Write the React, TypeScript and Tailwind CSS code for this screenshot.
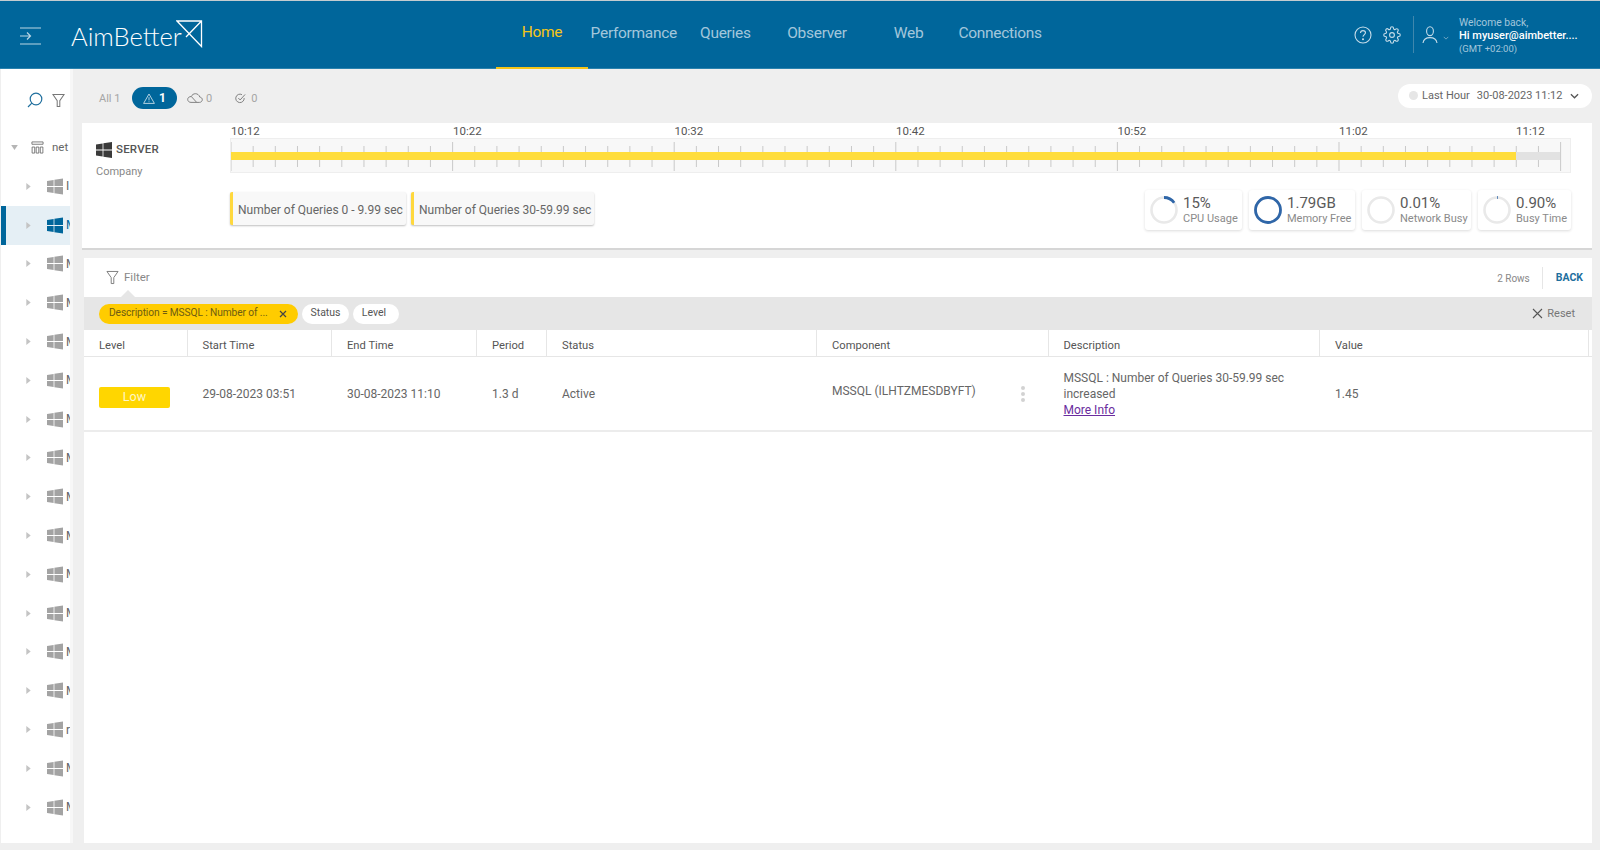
import React from "react";

function Win({ className }: { className: string }) {
  return (
    <svg viewBox="0 0 16 16" className={className} fill="currentColor">
      <polygon points="0,2.4 6.6,1.4 6.6,7.5 0,7.5" />
      <polygon points="7.4,1.3 16,0 16,7.5 7.4,7.5" />
      <polygon points="0,8.4 6.6,8.4 6.6,14.6 0,13.6" />
      <polygon points="7.4,8.4 16,8.4 16,16 7.4,14.7" />
    </svg>
  );
}

function Ring({ pct, start = -90 }: { pct: number; start?: number }) {
  const r = 12.5;
  const c = 2 * Math.PI * r;
  return (
    <svg viewBox="0 0 30 30" className="w-[30px] h-[30px] shrink-0">
      <circle cx="15" cy="15" r={r} fill="none" stroke="#e9e9e9" strokeWidth="2.6" />
      <circle
        cx="15"
        cy="15"
        r={r}
        fill="none"
        stroke="#2f66a8"
        strokeWidth="2.8"
        strokeDasharray={`${(c * pct) / 100} ${c}`}
        transform={`rotate(${start} 15 15)`}
      />
    </svg>
  );
}

const rows = ["I", "M", "M", "M", "M", "M", "M", "M", "M", "M", "M", "M", "M", "M", "r", "M", "M"];
const ticks = Array.from({ length: 61 }, (_, i) => i);

function Metric({ pct, value, label, w }: { pct: number; value: string; label: string; w: string }) {
  return (
    <div className={`${w} h-[40px] flex items-center gap-[4px] pl-[4px] bg-white rounded-[3px] shadow-[0_1px_3px_rgba(0,0,0,0.14)]`}>
      <Ring pct={pct} />
      <div className="flex flex-col">
        <span className="text-[15px] leading-[18px] text-[#5a5a5a]">{value}</span>
        <span className="text-[11px] leading-[14px] text-[#8a8a8a] whitespace-nowrap">{label}</span>
      </div>
    </div>
  );
}

function Head({ children, last }: { children?: React.ReactNode; last?: boolean }) {
  return (
    <div className={`h-full flex items-center pt-[7px] text-[11.2px] text-[#555] ${last ? "" : "pl-[15px] border-r border-[#e6e6e6]"}`}>
      {children}
    </div>
  );
}

function Cell({ children }: { children?: React.ReactNode }) {
  return <div className="flex items-center pl-[15px] text-[12px] text-[#666]">{children}</div>;
}

export default function App() {
  return (
    <div className="w-[1600px] h-[850px] overflow-hidden bg-[#efefef] border-t border-[#c4ccd0] font-['Roboto',sans-serif]">
      <header className="h-[68px] bg-[#00669b] border-b border-[#2a82ae] flex items-center">
        <svg viewBox="0 0 22 18" className="w-[22px] h-[18px] ml-[20px] mt-[3px] shrink-0 text-[#b9d5e4]" fill="none" stroke="currentColor" strokeWidth="1.2">
          <path d="M0 1H21M0 17H21M0 9H10M7 5.5L10.5 9L7 12.5" />
        </svg>
        <div className="ml-[29px] w-[135px] shrink-0 flex items-start -mt-[2px]">
          <span className="w-[105px] font-['Lato',sans-serif] font-light text-[25.5px] leading-[30px] text-white mt-[4px] whitespace-nowrap">AimBetter</span>
          <svg viewBox="0 0 27 28" className="w-[27px] h-[28px] mt-[3px] shrink-0" fill="none" stroke="#fff" strokeWidth="1.3">
            <path d="M1 1H25.5V26.5L1 1ZM25.5 1L10 17" />
          </svg>
        </div>
        <nav className="ml-[290px] flex self-start h-[68px] shrink-0 text-[15.5px] tracking-[-0.3px] text-[#a3c7db]">
          <a className="w-[92px] h-full flex items-center justify-center pb-[3px] text-[#f5c518] border-b-2 border-[#f5c518]">Home</a>
          <a className="w-[91.6px] h-full flex items-center justify-center pb-[3px]">Performance</a>
          <a className="w-[91.6px] h-full flex items-center justify-center pb-[3px]">Queries</a>
          <a className="w-[91.6px] h-full flex items-center justify-center pb-[3px]">Observer</a>
          <a className="w-[91.6px] h-full flex items-center justify-center pb-[3px]">Web</a>
          <a className="w-[91.6px] h-full flex items-center justify-center pb-[3px]">Connections</a>
        </nav>
        <div className="ml-[308px] flex items-center">
          <svg viewBox="0 0 18 18" className="w-[18px] h-[18px] text-[#c5dce9]" fill="none" stroke="currentColor" strokeWidth="1.1">
            <circle cx="9" cy="9" r="8" />
            <path d="M6.5 7C6.5 5.5 7.6 4.6 9 4.6C10.5 4.6 11.5 5.5 11.5 6.8C11.5 8.5 9 8.7 9 10.8" />
            <circle cx="9" cy="13.2" r="0.5" fill="currentColor" />
          </svg>
          <svg viewBox="0 0 24 24" className="w-[18px] h-[18px] ml-[11px] text-[#c5dce9]" fill="none" stroke="currentColor" strokeWidth="1.5">
            <circle cx="12" cy="12" r="3.2" />
            <path d="M19.4 15a1.65 1.65 0 0 0 .33 1.82l.06.06a2 2 0 1 1-2.83 2.83l-.06-.06a1.65 1.65 0 0 0-1.82-.33 1.65 1.65 0 0 0-1 1.51V21a2 2 0 0 1-4 0v-.09A1.65 1.65 0 0 0 9 19.4a1.65 1.65 0 0 0-1.82.33l-.06.06a2 2 0 1 1-2.83-2.83l.06-.06a1.65 1.65 0 0 0 .33-1.82 1.65 1.65 0 0 0-1.51-1H3a2 2 0 0 1 0-4h.09A1.65 1.65 0 0 0 4.6 9a1.65 1.65 0 0 0-.33-1.82l-.06-.06a2 2 0 1 1 2.83-2.83l.06.06a1.65 1.65 0 0 0 1.82.33H9a1.65 1.65 0 0 0 1-1.51V3a2 2 0 0 1 4 0v.09a1.65 1.65 0 0 0 1 1.51 1.65 1.65 0 0 0 1.82-.33l.06-.06a2 2 0 1 1 2.83 2.83l-.06.06a1.65 1.65 0 0 0-.33 1.82V9a1.65 1.65 0 0 0 1.51 1H21a2 2 0 0 1 0 4h-.09a1.65 1.65 0 0 0-1.51 1z" />
          </svg>
          <div className="w-px h-[37px] bg-[#3f87ad] ml-[12px]" />
          <svg viewBox="0 0 16 18" className="w-[16px] h-[18px] ml-[8px] text-[#c5dce9]" fill="none" stroke="currentColor" strokeWidth="1.1">
            <ellipse cx="8" cy="5.2" rx="3.4" ry="4.4" />
            <path d="M1 17C1.6 13 4.2 11.6 8 11.6C11.8 11.6 14.4 13 15 17" />
          </svg>
          <svg viewBox="0 0 8 5" className="w-[6px] h-[4px] ml-[5px] mt-[6px] text-[#8fb8cf]" fill="none" stroke="currentColor" strokeWidth="1">
            <path d="M1 1L4 4L7 1" />
          </svg>
          <div className="ml-[10px] flex flex-col w-[125px]">
            <span className="text-[10.3px] leading-[13px] text-[#a3c7db]">Welcome back,</span>
            <span className="text-[11px] leading-[14px] text-white font-medium whitespace-nowrap">Hi myuser@aimbetter....</span>
            <span className="text-[9.5px] leading-[11px] text-[#a3c7db]">(GMT +02:00)</span>
          </div>
        </div>
      </header>

      <div className="flex h-[774px]">
        <aside className="w-[73px] h-full shrink-0 bg-white border-l border-[#efefef] border-r-[3px] border-r-[#f7f7f7] overflow-hidden">
          <div className="h-[59px] flex items-center pl-[26px] pt-[3px] gap-[9px]">
            <svg viewBox="0 0 16 16" className="w-[16px] h-[16px] text-[#1f6f9e]" fill="none" stroke="currentColor" strokeWidth="1.2">
              <circle cx="9" cy="7" r="5.8" />
              <path d="M4.8 11.2L1 15" />
            </svg>
            <svg viewBox="0 0 14 15" className="w-[13px] h-[15px] text-[#777]" fill="none" stroke="currentColor" strokeWidth="1.1">
              <path d="M1 1H13L8.4 7.6V14H5.6V7.6L1 1Z" />
            </svg>
          </div>
          <div className="h-[39px] flex items-center whitespace-nowrap">
            <svg viewBox="0 0 8 6" className="w-[7px] h-[5px] ml-[10px] text-[#b5b5b5]" fill="currentColor">
              <polygon points="0,0 8,0 4,6" />
            </svg>
            <svg viewBox="0 0 14 14" className="w-[13px] h-[13px] ml-[13px] text-[#666]" fill="none" stroke="currentColor" strokeWidth="0.9">
              <path d="M1 1H13V3.5H1ZM1.2 6.5H4V13H1.2ZM5.6 6.5H8.4V13H5.6ZM10 6.5H12.8V13H10Z" />
            </svg>
            <span className="ml-[8px] text-[11.5px] text-[#666]">net</span>
          </div>
          {rows.map((r, i) => (
            <div
              key={i}
              className={`h-[38.8px] flex items-center whitespace-nowrap ${i === 1 ? "bg-[#e5eff5] border-l-[5px] border-[#00669b]" : "pl-[5px]"}`}
            >
              <svg viewBox="0 0 5 8" className="w-[5px] h-[7px] ml-[20px] shrink-0 text-[#c4c4c4]" fill="currentColor">
                <polygon points="0,0 5,4 0,8" />
              </svg>
              <Win className={`w-[16px] h-[17px] ml-[16px] shrink-0 ${i === 1 ? "text-[#00669b]" : "text-[#a3a3a3]"}`} />
              <span className={`ml-[3px] text-[12px] ${i === 1 ? "text-[#00669b]" : "text-[#666]"}`}>{r}</span>
            </div>
          ))}
        </aside>

        <main className="flex-1 min-w-0 pl-[9px] pr-[8px] flex flex-col">
          <div className="h-[54px] flex items-center justify-between text-[11px] text-[#a5a5a5] pb-[1px]">
            <div className="flex items-center pl-[17px] mt-[5px]">
              <span className="w-[33px] pt-[3px]">All 1</span>
              <div className="w-[45px] h-[22px] rounded-full bg-[#00669b] flex items-center justify-center gap-[4px] text-white font-bold text-[12px]">
                <svg viewBox="0 0 12 11" className="w-[12px] h-[11px] text-[#c5dce9]" fill="none" stroke="currentColor" strokeWidth="0.9">
                  <path d="M6 1L11.4 10.4H0.6L6 1ZM6 4.2V7.4M6 8.4V9.2" />
                </svg>
                1
              </div>
              <svg viewBox="0 0 16 10" className="w-[16px] h-[10px] ml-[10px] text-[#777]" fill="none" stroke="currentColor" strokeWidth="0.9">
                <path d="M4 9.4H12.4C14 9.4 15.3 8.2 15.3 6.7C15.3 5.3 14.2 4.2 12.8 4.1C12.2 2 10.4 0.7 8.4 0.7C6.6 0.7 5 1.8 4.3 3.5C2.3 3.5 0.7 4.6 0.7 6.4C0.7 8.2 2.2 9.4 4 9.4ZM4.3 3.5L9.5 9.2" />
              </svg>
              <span className="ml-[3px] pt-[3px]">0</span>
              <svg viewBox="0 0 12 12" className="w-[11px] h-[11px] ml-[23px] text-[#777]" fill="none" stroke="currentColor" strokeWidth="1">
                <path d="M10 5.5A4.6 4.6 0 1 1 7.6 1.8M3.6 5.5L5.6 7.6L11 1.6" />
              </svg>
              <span className="ml-[5px] pt-[3px]">0</span>
            </div>
            <div className="w-[194px] h-[24px] rounded-full bg-white flex items-center pl-[11px] text-[11px] text-[#666]">
              <span className="w-[9px] h-[9px] rounded-full bg-[#e6e6e6]" />
              <span className="ml-[4px] pt-[2px]">Last Hour</span>
              <span className="ml-[7px] pt-[2px]">30-08-2023 11:12</span>
              <svg viewBox="0 0 10 6" className="w-[9px] h-[6px] ml-[7px] text-[#555]" fill="none" stroke="currentColor" strokeWidth="1.4">
                <path d="M1 1L5 5L9 1" />
              </svg>
            </div>
          </div>

          <section className="h-[127px] shrink-0 bg-white border-b-2 border-[#d6d6d6] flex">
            <div className="w-[148px] pl-[14px] pt-[18px]">
              <div className="flex items-center">
                <Win className="w-[16px] h-[16px] text-[#3a3a3a]" />
                <span className="ml-[4px] text-[11.5px] font-medium tracking-[0.2px] text-[#555]">SERVER</span>
              </div>
              <div className="mt-[6px] text-[11px] text-[#888]">Company</div>
            </div>
            <div className="w-[1341px] flex flex-col">
              <div className="h-[15px] pl-[1px] pt-[1px] flex text-[11.5px] leading-[15px] text-[#555]">
                <span className="w-[222px]">10:12</span>
                <span className="w-[221.5px]">10:22</span>
                <span className="w-[221.5px]">10:32</span>
                <span className="w-[221.5px]">10:42</span>
                <span className="w-[221.5px]">10:52</span>
                <span className="w-[177px]">11:02</span>
                <span>11:12</span>
              </div>
              <div className="h-[35px] bg-[#f8f8f8] border border-[#eeeeee] overflow-hidden">
                <svg viewBox="0 0 1339 33" className="w-[1339px] h-[33px] block">
                  {ticks.map((i) => (
                    <line
                      key={i}
                      x1={i * 22.16}
                      x2={i * 22.16}
                      y1={i % 10 === 0 ? 3 : 7}
                      y2={i % 10 === 0 ? 32 : 28}
                      stroke="#c9c9c9"
                      strokeWidth="1"
                    />
                  ))}
                  <rect x="0" y="13" width="1329" height="8" fill="#e2e2e2" />
                  <rect x="0" y="13" width="1285" height="8" fill="#ffdd3c" />
                </svg>
              </div>
              <div className="mt-[19px] flex items-start justify-between">
                <div className="flex gap-[5px]">
                  <div className="w-[176px] h-[33px] bg-[#f8f8f8] border-l-[3px] border-[#ffd83d] rounded-[2px] shadow-[0_1px_2px_rgba(0,0,0,0.25)] flex items-center pl-[5px] pt-[2px] text-[12px] text-[#666] whitespace-nowrap">
                    Number of Queries 0 - 9.99 sec
                  </div>
                  <div className="w-[183px] h-[33px] bg-[#f8f8f8] border-l-[3px] border-[#ffd83d] rounded-[2px] shadow-[0_1px_2px_rgba(0,0,0,0.25)] flex items-center pl-[5px] pt-[2px] text-[12px] text-[#666] whitespace-nowrap">
                    Number of Queries 30-59.99 sec
                  </div>
                </div>
                <div className="flex gap-[7px] -mt-[2px]">
                  <Metric pct={15} value="15%" label="CPU Usage" w="w-[97px]" />
                  <Metric pct={100} value="1.79GB" label="Memory Free" w="w-[106px]" />
                  <Metric pct={0} value="0.01%" label="Network Busy" w="w-[109px]" />
                  <Metric pct={1} value="0.90%" label="Busy Time" w="w-[93px]" />
                </div>
              </div>
            </div>
          </section>

          <section className="mt-[8px] ml-[2px] h-[585px] bg-white flex flex-col">
            <div className="h-[39px] shrink-0 flex items-center pl-[22px] pr-[9px] text-[11.5px] text-[#888]">
              <svg viewBox="0 0 14 15" className="w-[13px] h-[15px] text-[#777]" fill="none" stroke="currentColor" strokeWidth="1">
                <path d="M1 1H13L8.4 7.6V14H5.6V7.6L1 1Z" />
              </svg>
              <span className="ml-[5px]">Filter</span>
              <span className="ml-auto pt-[1px] text-[10px]">2 Rows</span>
              <span className="ml-[12px] w-px h-[22px] bg-[#e6e6e6]" />
              <span className="ml-[13px] pt-[1px] text-[10.5px] font-bold text-[#1f6f9e]">BACK</span>
            </div>
            <div className="relative h-[33px] shrink-0 bg-[#e6e6e6] flex items-center pl-[15px] pr-[17px] text-[10.5px] text-[#555]">
              <span className="absolute left-[37px] -top-[7px] w-0 h-0 border-x-[7px] border-x-transparent border-b-[7px] border-b-[#e6e6e6]" />
              <div className="w-[199px] h-[20px] rounded-full bg-[#ffcc00] flex items-center pl-[10px] pr-[11px] justify-between text-[#6e5c12] text-[10.2px] tracking-[-0.1px]">
                <span className="whitespace-nowrap pb-[2px]">Description = MSSQL : Number of ...</span>
                <svg viewBox="0 0 8 8" className="w-[8px] h-[8px] text-[#444]" fill="none" stroke="currentColor" strokeWidth="1.2">
                  <path d="M1 1L7 7M7 1L1 7" />
                </svg>
              </div>
              <div className="ml-[4px] w-[47px] h-[20px] rounded-full bg-white flex items-center justify-center pb-[1px]">Status</div>
              <div className="ml-[4px] w-[46px] h-[20px] rounded-full bg-white flex items-center justify-center pr-[4px] pb-[1px]">Level</div>
              <svg viewBox="0 0 11 11" className="ml-auto w-[11px] h-[11px] text-[#555]" fill="none" stroke="currentColor" strokeWidth="1.1">
                <path d="M1 1L10 10M10 1L1 10" />
              </svg>
              <span className="ml-[4px] pt-[2px] text-[11px] text-[#777]">Reset</span>
            </div>
            <div className="h-[27px] shrink-0 grid grid-cols-[103.5px_144.5px_145px_70px_270px_231.5px_271.5px_269px_1fr] border-b border-[#e6e6e6]">
              <Head>Level</Head>
              <Head>Start Time</Head>
              <Head>End Time</Head>
              <Head>Period</Head>
              <Head>Status</Head>
              <Head>Component</Head>
              <Head>Description</Head>
              <Head>Value</Head>
              <Head last />
            </div>
            <div className="h-[75px] shrink-0 grid grid-cols-[103.5px_144.5px_145px_70px_270px_231.5px_271.5px_269px_1fr] border-b-2 border-[#ececec]">
              <Cell>
                <span className="w-[71px] h-[21px] mt-[7px] rounded-[2px] bg-[#ffd600] flex items-center justify-center text-[12.5px] text-[#fff6c8]">Low</span>
              </Cell>
              <Cell>29-08-2023 03:51</Cell>
              <Cell>30-08-2023 11:10</Cell>
              <Cell>1.3 d</Cell>
              <Cell>Active</Cell>
              <Cell>
                <span className="-mt-[6px]">MSSQL (ILHTZMESDBYFT)</span>
                <span className="ml-auto mr-[24px] flex flex-col gap-[2px]">
                  <i className="w-[4px] h-[4px] rounded-full bg-[#d2d2d2]" />
                  <i className="w-[4px] h-[4px] rounded-full bg-[#d2d2d2]" />
                  <i className="w-[4px] h-[4px] rounded-full bg-[#d2d2d2]" />
                </span>
              </Cell>
              <div className="flex flex-col justify-center pl-[15px] text-[12px] leading-[16px] text-[#666]">
                <span>MSSQL : Number of Queries 30-59.99 sec</span>
                <span>increased</span>
                <a className="text-[#6a2c9e] underline">More Info</a>
              </div>
              <Cell>1.45</Cell>
              <div />
            </div>
          </section>
        </main>
      </div>
    </div>
  );
}
